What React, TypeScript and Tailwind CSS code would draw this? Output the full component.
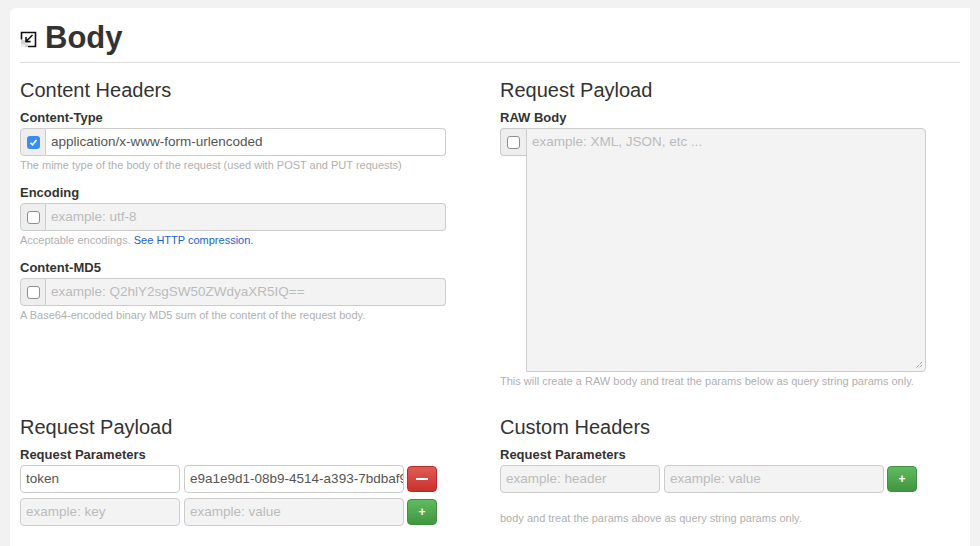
import React from 'react';

const font = { fontFamily: '"Liberation Sans", Arial, sans-serif' };

const Check: React.FC<{ on?: boolean }> = ({ on }) =>
  on ? (
    <span className="w-[13px] h-[13px] rounded-[3px] bg-[#3b8cf3] flex items-center justify-center">
      <svg width="9" height="9" viewBox="0 0 9 9">
        <path d="M1.5 4.8 L3.6 6.8 L7.5 2" fill="none" stroke="#fff" strokeWidth="1.6" />
      </svg>
    </span>
  ) : (
    <span className="w-[13px] h-[13px] rounded-[3px] bg-white border border-[#8e8e8e]" />
  );

const CheckInput: React.FC<{ on?: boolean; value?: string; placeholder?: string }> = ({ on, value, placeholder }) => (
  <div className="flex w-[426px] h-[28px]">
    <div className="w-[26px] shrink-0 bg-[#eeeeee] border border-[#cccccc] rounded-l-[4px] flex items-center justify-center">
      <Check on={on} />
    </div>
    <div
      className={`flex-1 border border-l-0 border-[#cccccc] rounded-r-[4px] flex items-center px-[5px] text-[13.5px] ${
        value ? 'bg-white text-[#555555]' : 'bg-[#f3f3f3] text-[#bbbbbb]'
      }`}
    >
      {value || placeholder}
    </div>
  </div>
);

const Field: React.FC<{ w: string; value?: string; placeholder?: string }> = ({ w, value, placeholder }) => (
  <div
    className={`${w} h-[28px] shrink-0 border border-[#cccccc] rounded-[4px] flex items-center px-[5px] text-[13.5px] overflow-hidden whitespace-nowrap ${
      value ? 'bg-white text-[#555555]' : 'bg-[#f3f3f3] text-[#bbbbbb]'
    }`}
  >
    {value || placeholder}
  </div>
);

const Btn: React.FC<{ red?: boolean }> = ({ red }) => (
  <div
    className={`w-[30px] h-[26px] shrink-0 rounded-[4px] flex items-center justify-center text-white border ${
      red ? 'bg-gradient-to-b from-[#e05b55] to-[#c9302c] border-[#b52b27]' : 'bg-gradient-to-b from-[#5fbb5f] to-[#419641] border-[#3e8f3e]'
    }`}
  >
    {red ? (
      <span className="w-[12px] h-[2px] bg-white" />
    ) : (
      <span className="text-[12px] font-bold leading-none">+</span>
    )}
  </div>
);

const Label: React.FC<{ children: React.ReactNode }> = ({ children }) => (
  <div className="text-[13px] font-bold text-[#333333] leading-[16px] mb-[2px]">{children}</div>
);

const Help: React.FC<{ children: React.ReactNode }> = ({ children }) => (
  <div className="text-[11px] text-[#b0b0b0] leading-[14px] mt-[2px]">{children}</div>
);

const H2: React.FC<{ children: React.ReactNode }> = ({ children }) => (
  <div className="text-[20px] text-[#333333] leading-[24px] mb-[8px]">{children}</div>
);

export default function App() {
  return (
    <div className="w-[980px] h-[546px] bg-[#f2f2f2] pt-[8px] pl-[10px] overflow-hidden" style={font}>
      <div className="w-[960px] h-[600px] bg-white rounded-tl-[6px] px-[10px]">
        <div className="flex items-center h-[54px] pt-[4px]">
          <svg width="17" height="17" viewBox="0 0 17 17" className="mt-[4px]">
            <rect x="1" y="9" width="4" height="4" fill="#d4d4d4" />
            <rect x="5" y="13" width="3" height="3" fill="#d4d4d4" />
            <rect x="1" y="13" width="4" height="3" fill="#ececec" />
            <rect x="5" y="9" width="3" height="4" fill="#ececec" />
            <path d="M8 1.5 H15.5 V15.5 H8 M1.5 8.5 V1.5 H8" fill="none" stroke="#111" strokeWidth="1.6" />
            <path d="M12.5 4 L6.5 10 M6 6 V10.6 H10.6" fill="none" stroke="#111" strokeWidth="1.6" />
          </svg>
          <span className="ml-[8px] text-[31px] font-bold text-[#333333] leading-none">Body</span>
        </div>
        <div className="h-px bg-[#dddddd] mb-[15px]" />
        <div className="grid grid-cols-[480px_460px]">
          <div>
            <H2>Content Headers</H2>
            <Label>Content-Type</Label>
            <CheckInput on value="application/x-www-form-urlencoded" />
            <Help>The mime type of the body of the request (used with POST and PUT requests)</Help>
            <div className="mt-[13px]">
              <Label>Encoding</Label>
              <CheckInput placeholder="example: utf-8" />
              <Help>
                Acceptable encodings. <span className="text-[#1a5fd0]">See HTTP compression.</span>
              </Help>
            </div>
            <div className="mt-[13px]">
              <Label>Content-MD5</Label>
              <CheckInput placeholder="example: Q2hlY2sgSW50ZWdyaXR5IQ==" />
              <Help>A Base64-encoded binary MD5 sum of the content of the request body.</Help>
            </div>
          </div>
          <div>
            <H2>Request Payload</H2>
            <Label>RAW Body</Label>
            <div className="flex">
              <div className="w-[26px] h-[28px] shrink-0 bg-[#eeeeee] border border-[#cccccc] border-r-0 rounded-l-[4px] flex items-center justify-center">
                <Check />
              </div>
              <div className="relative w-[400px] h-[244px] bg-[#f3f3f3] border border-[#cccccc] rounded-r-[4px] px-[5px] pt-[3px] text-[13.5px] text-[#bbbbbb]">
                example: XML, JSON, etc ...
                <svg width="8" height="8" viewBox="0 0 8 8" className="absolute right-[2px] bottom-[2px]">
                  <path d="M7 1 L1 7 M7 4 L4 7" stroke="#777" strokeWidth="1" strokeDasharray="1 1" />
                </svg>
              </div>
            </div>
            <Help>This will create a RAW body and treat the params below as query string params only.</Help>
          </div>
          <div className="mt-[27px]">
            <H2>Request Payload</H2>
            <Label>Request Parameters</Label>
            <div className="flex items-center gap-[4px]">
              <Field w="w-[160px]" value="token" />
              <Field w="w-[220px]" value="e9a1e9d1-08b9-4514-a393-7bdbaf9c1e2a" />
              <div className="ml-[-1px]">
                <Btn red />
              </div>
            </div>
            <div className="flex items-center gap-[4px] mt-[5px]">
              <Field w="w-[160px]" placeholder="example: key" />
              <Field w="w-[220px]" placeholder="example: value" />
              <div className="ml-[-1px]">
                <Btn />
              </div>
            </div>
          </div>
          <div className="mt-[27px]">
            <H2>Custom Headers</H2>
            <Label>Request Parameters</Label>
            <div className="flex items-center gap-[4px]">
              <Field w="w-[160px]" placeholder="example: header" />
              <Field w="w-[220px]" placeholder="example: value" />
              <div className="ml-[-1px]">
                <Btn />
              </div>
            </div>
            <div className="mt-[18px]">
              <Help>body and treat the params above as query string params only.</Help>
            </div>
          </div>
        </div>
      </div>
    </div>
  );
}
